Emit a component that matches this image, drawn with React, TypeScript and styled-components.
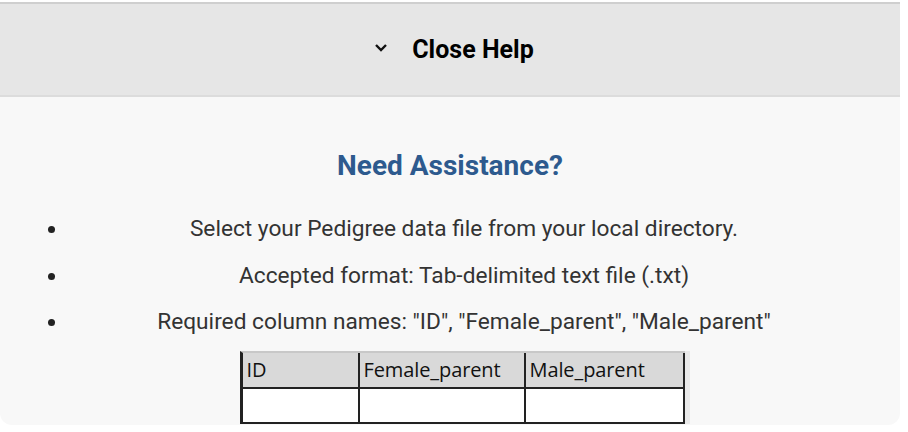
import React from "react";
import styled, { createGlobalStyle } from "styled-components";

const Global = createGlobalStyle`
  html, body { margin: 0; padding: 0; background: #ffffff; }
  body { font-family: Roboto, "Liberation Sans", sans-serif; }
`;

const Panel = styled.section`
  width: 900px;
  height: 421px;
  margin-top: 2px;
  border-top: 2px solid #cfcfcf;
  background: #f8f8f8;
  border-radius: 0 0 12px 12px;
  overflow: hidden;
  display: flex;
  flex-direction: column;
`;

const Header = styled.button`
  all: unset;
  box-sizing: border-box;
  height: 93px;
  flex: none;
  background: #e6e6e6;
  border-bottom: 2px solid #dcdcdc;
  display: flex;
  align-items: center;
  justify-content: center;
  gap: 24px;
  padding-left: 8px;
  cursor: pointer;
  font-family: Roboto, sans-serif;
  font-weight: 700;
  font-size: 25px;
  color: #000;
`;

const Chevron = styled.svg`
  width: 14px;
  height: 10px;
  margin-top: -3px;
`;

const Body = styled.div`
  flex: 1;
  display: flex;
  flex-direction: column;
  align-items: center;
  padding: 52px 0 0 0;
`;

const Title = styled.h2`
  margin: 0 0 32px;
  font-family: Roboto, sans-serif;
  font-weight: 700;
  font-size: 28px;
  line-height: 34px;
  color: #2d5a8e;
`;

const List = styled.ul`
  align-self: stretch;
  margin: 0 40px 0 28px;
  padding-left: 40px;
`;

const Item = styled.li`
  text-align: center;
  font-family: Roboto, sans-serif;
  font-size: 22.7px;
  line-height: 28px;
  color: #333;
  margin-bottom: 18.5px;
  &::marker { font-size: 22px; color: #222; }
`;

const Sheet = styled.table`
  flex: none;
  margin-top: -3.5px;
  margin-left: 24px;
  border-collapse: separate;
  border-spacing: 0;
  border-top: 2px solid #c8c8c8;
  border-left: 3px solid #222;
  font-family: "Open Sans", "Noto Sans", sans-serif;
  font-size: 20px;
  color: #111;
  box-shadow: 5px 0 0 #e9e9e9;
`;

const HeadCell = styled.th<{ w: number }>`
  box-sizing: content-box;
  width: ${(p) => p.w}px;
  height: 34px;
  padding: 0 0 0 4px;
  background: #d9d9d9;
  text-align: left;
  font-weight: 400;
  border-right: 2px solid #222;
  border-bottom: 2px solid #222;
  line-height: 34px;
  letter-spacing: -0.1px;
`;

const Cell = styled.td`
  height: 33px;
  padding: 0;
  background: #fff;
  border-right: 2px solid #222;
  border-bottom: 2px solid #222;
`;

export default function App() {
  return (
    <>
      <Global />
      <Panel>
        <Header>
          <Chevron viewBox="0 0 14 10">
            <path d="M2 2 L7 7 L12 2" fill="none" stroke="#111" strokeWidth="2.4" />
          </Chevron>
          <span>Close Help</span>
        </Header>
        <Body>
          <Title>Need Assistance?</Title>
          <List>
            <Item>Select your Pedigree data file from your local directory.</Item>
            <Item>Accepted format: Tab-delimited text file (.txt)</Item>
            <Item>Required column names: "ID", "Female_parent", "Male_parent"</Item>
          </List>
          <Sheet>
            <thead>
              <tr>
                <HeadCell w={111}>ID</HeadCell>
                <HeadCell w={160}>Female_parent</HeadCell>
                <HeadCell w={153}>Male_parent</HeadCell>
              </tr>
            </thead>
            <tbody>
              <tr>
                <Cell />
                <Cell />
                <Cell />
              </tr>
            </tbody>
          </Sheet>
        </Body>
      </Panel>
    </>
  );
}
